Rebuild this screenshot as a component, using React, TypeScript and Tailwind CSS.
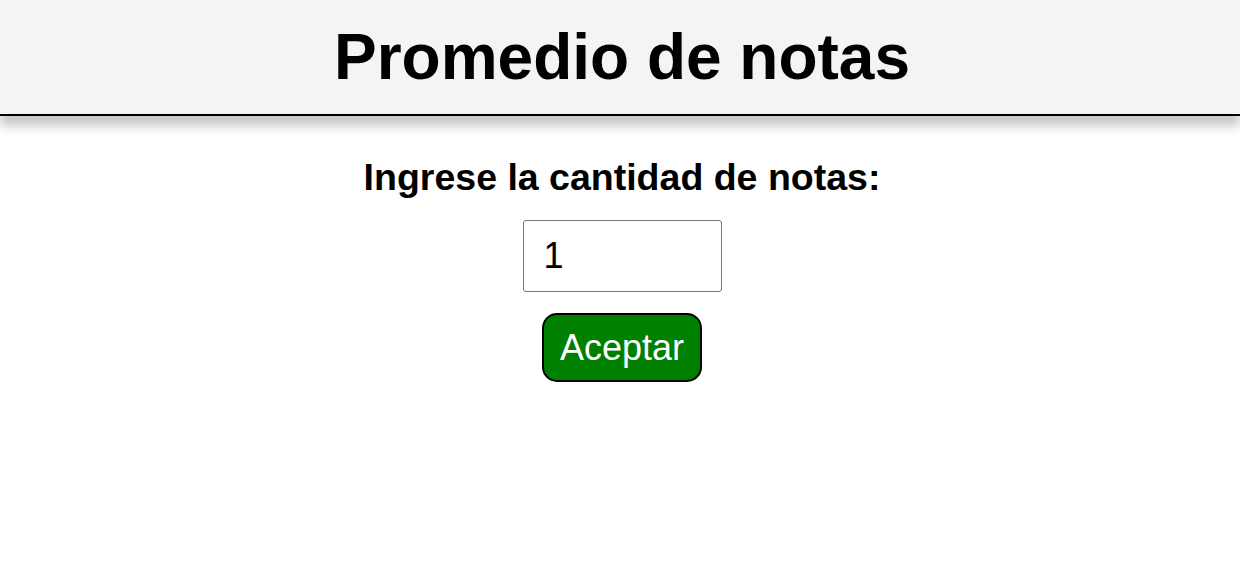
import React from "react";

export default function App() {
  return (
    <div className="min-h-[579px] bg-white pl-1" style={{ fontFamily: '"Liberation Sans", Arial, sans-serif' }}>
      <header className="bg-[#f4f4f4] border-b-2 border-black pt-[21px] pb-[21px] shadow-[0_10px_10px_rgba(0,0,0,0.22)] -ml-1 pl-1">
        <h1 className="text-center text-[64px] leading-[72px] font-bold text-black">Promedio de notas</h1>
      </header>
      <main className="flex flex-col items-center pt-[40px]">
        <label className="text-[37.5px] leading-[42px] font-bold text-black">Ingrese la cantidad de notas:</label>
        <input
          type="text"
          defaultValue="1"
          className="mt-[22px] w-[199px] h-[72px] border border-[#767676] rounded-[3px] pl-[20px] pr-[10px] text-[36px] text-black outline-none"
          style={{ fontFamily: '"Liberation Sans", Arial, sans-serif' }}
        />
        <button className="mt-[21px] w-[160px] h-[69px] bg-[#008000] border-2 border-black rounded-[15px] text-white text-[36px] flex items-center justify-center">
          Aceptar
        </button>
      </main>
    </div>
  );
}
